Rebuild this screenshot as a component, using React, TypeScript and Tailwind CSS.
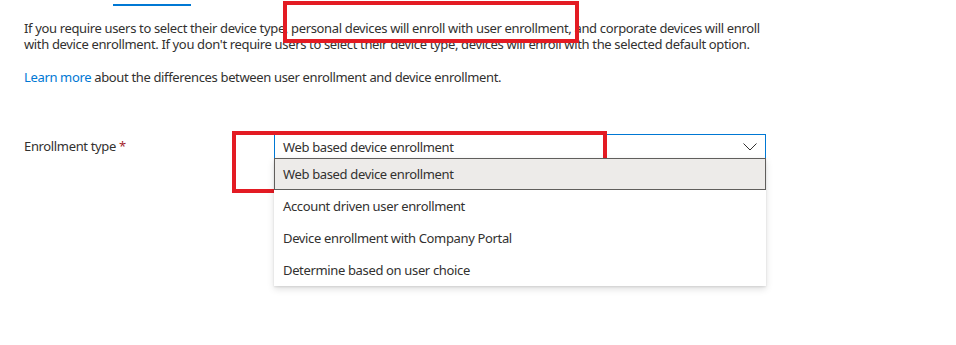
import React from 'react';

const options = [
  'Web based device enrollment',
  'Account driven user enrollment',
  'Device enrollment with Company Portal',
  'Determine based on user choice',
];

const App: React.FC = () => {
  const selected = options[0];

  return (
    <div className="relative h-[345px] w-[956px] overflow-hidden bg-white font-['Segoe_UI','Noto_Sans',sans-serif] text-[13px] leading-4 tracking-[-0.35px] text-[#323130]">
      <div className="ml-[113px] mt-[4px] h-[2px] w-[78px] bg-[#0078d4]" />

      <div className="px-[24px] pt-[14px]">
        <p className="w-[745px]">
          If you require users to select their device type, personal devices will enroll with user enrollment, and corporate devices will enroll
          with device enrollment. If you don't require users to select their device type, devices will enroll with the selected default option.
        </p>
        <p className="mt-[17px]">
          <a className="text-[#0078d4]">Learn more</a> about the differences between user enrollment and device enrollment.
        </p>

        <div className="mt-[49px] flex">
          <label className="w-[250px] pt-[4px]">
            Enrollment type <span className="text-[#a4262c]">*</span>
          </label>
          <div className="relative w-[492px]">
            <div className="flex h-[24px] items-center justify-between border border-b-0 border-[#0078d4] pl-[8px] pr-[8px]">
              <span>{selected}</span>
              <svg width="14" height="8" viewBox="0 0 14 8" fill="none" stroke="#323130" strokeWidth="1">
                <path d="M0.5 0.5 L7 7 L13.5 0.5" />
              </svg>
            </div>
            <ul className="absolute left-0 top-full z-10 w-[492px] bg-white shadow-[0_3px_7px_rgba(0,0,0,0.13),0_1px_2px_rgba(0,0,0,0.1)]">
              {options.map((option) => (
                <li
                  key={option}
                  className={
                    option === selected
                      ? 'flex h-[32px] items-center border border-[#605e5c] bg-[#edebe9] pl-[8px]'
                      : 'flex h-[32px] items-center pl-[9px]'
                  }
                >
                  {option}
                </li>
              ))}
            </ul>
          </div>
        </div>
      </div>

      {/* annotation boxes */}
      <div className="pointer-events-none absolute left-[283px] top-[1px] h-[42px] w-[296px] border-4 border-[#e31b23]" />
      <div className="pointer-events-none absolute left-[232px] top-[131px] h-[62px] w-[375px] border-4 border-[#e31b23]" />
    </div>
  );
};

export default App;
